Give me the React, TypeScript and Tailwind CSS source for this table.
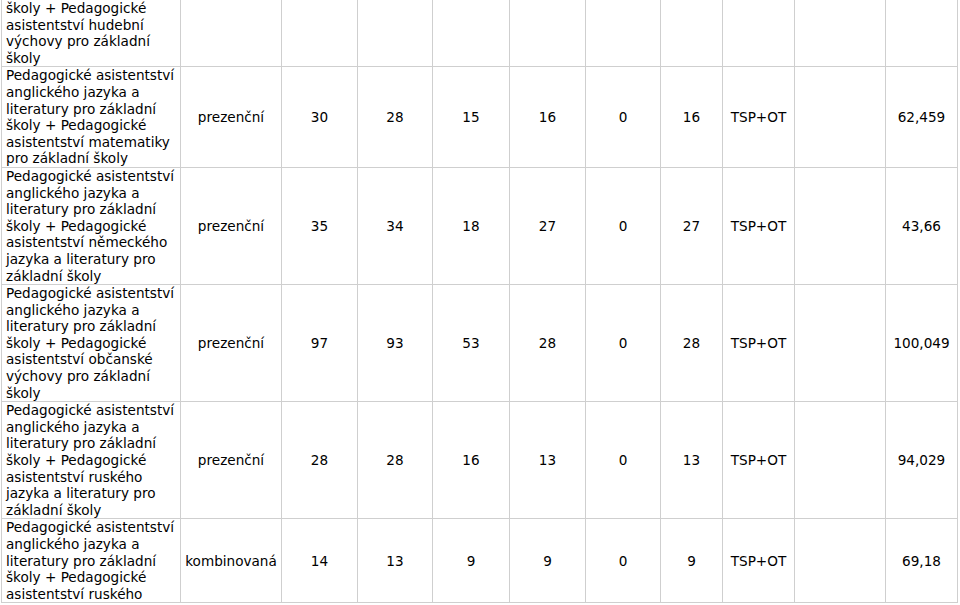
const rows = [
  {
    name: "Pedagogické asistentství anglického jazyka a literatury pro základní školy + Pedagogické asistentství matematiky pro základní školy",
    form: "prezenční",
    nums: ["30", "28", "15", "16", "0", "16"],
    value: "62,459",
  },
  {
    name: "Pedagogické asistentství anglického jazyka a literatury pro základní školy + Pedagogické asistentství německého jazyka a literatury pro základní školy",
    form: "prezenční",
    nums: ["35", "34", "18", "27", "0", "27"],
    value: "43,66",
  },
  {
    name: "Pedagogické asistentství anglického jazyka a literatury pro základní školy + Pedagogické asistentství občanské výchovy pro základní školy",
    form: "prezenční",
    nums: ["97", "93", "53", "28", "0", "28"],
    value: "100,049",
  },
  {
    name: "Pedagogické asistentství anglického jazyka a literatury pro základní školy + Pedagogické asistentství ruského jazyka a literatury pro základní školy",
    form: "prezenční",
    nums: ["28", "28", "16", "13", "0", "13"],
    value: "94,029",
  },
  {
    name: "Pedagogické asistentství anglického jazyka a literatury pro základní školy + Pedagogické asistentství ruského",
    form: "kombinovaná",
    nums: ["14", "13", "9", "9", "0", "9"],
    value: "69,18",
  },
];

const widths = [179, 101, 76, 75, 77, 76, 75, 62, 72, 91, 72];
const cell = "border border-[#cfcfcf] px-[4px] py-0 align-middle text-center";

export default function App() {
  return (
    <div className="h-[605px] w-[960px] overflow-hidden bg-white text-black" style={{ fontFamily: '"DejaVu Sans", Verdana, sans-serif' }}>
      <table className="ml-[1px] w-[957px] table-fixed border-collapse text-[13.6px] leading-[16.6px]">
        <colgroup>
          {widths.map((w, i) => (
            <col key={i} style={{ width: w }} />
          ))}
        </colgroup>
        <tbody>
          <tr>
            <td className="border-x border-b border-[#cfcfcf] px-[4px] py-0 text-left align-top">
              školy + Pedagogické asistentství hudební výchovy pro základní školy
            </td>
            {widths.slice(1).map((_, i) => (
              <td key={i} className="border-x border-b border-[#cfcfcf]" />
            ))}
          </tr>
          {rows.map((r) => (
            <tr key={r.value}>
              <td className={`${cell} text-left`}>{r.name}</td>
              <td className={cell}>{r.form}</td>
              {r.nums.map((n, i) => (
                <td key={i} className={cell}>
                  {n}
                </td>
              ))}
              <td className={cell}>TSP+OT</td>
              <td className={cell} />
              <td className={cell}>{r.value}</td>
            </tr>
          ))}
        </tbody>
      </table>
    </div>
  );
}
